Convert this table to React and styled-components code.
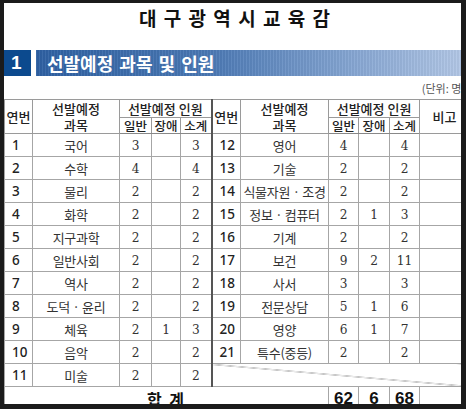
import React from "react";
import styled, { createGlobalStyle } from "styled-components";

const GlobalStyle = createGlobalStyle`
  html, body {
    margin: 0;
    padding: 0;
    background: #1b1b1b;
  }
  body {
    font-family: "Noto Sans CJK KR", "Noto Sans", sans-serif;
  }
`;

const left = [
  ["1", "국어", "3", "", "3"],
  ["2", "수학", "4", "", "4"],
  ["3", "물리", "2", "", "2"],
  ["4", "화학", "2", "", "2"],
  ["5", "지구과학", "2", "", "2"],
  ["6", "일반사회", "2", "", "2"],
  ["7", "역사", "2", "", "2"],
  ["8", "도덕 · 윤리", "2", "", "2"],
  ["9", "체육", "2", "1", "3"],
  ["10", "음악", "2", "", "2"],
  ["11", "미술", "2", "", "2"],
];

const right = [
  ["12", "영어", "4", "", "4"],
  ["13", "기술", "2", "", "2"],
  ["14", "식물자원 · 조경", "2", "", "2"],
  ["15", "정보 · 컴퓨터", "2", "1", "3"],
  ["16", "기계", "2", "", "2"],
  ["17", "보건", "9", "2", "11"],
  ["18", "사서", "3", "", "3"],
  ["19", "전문상담", "5", "1", "6"],
  ["20", "영양", "6", "1", "7"],
  ["21", "특수(중등)", "2", "", "2"],
  null,
];

const widths = [28, 87, 32, 29, 31, 29, 88, 30, 31, 30, 50];

const App = () => {
  return (
    <>
      <GlobalStyle />
      <Frame>
        <Panel>
          <Title>대 구 광 역 시 교 육 감</Title>
          <Banner>
            <NumBox>1</NumBox>
            <Bar>선발예정 과목 및 인원</Bar>
          </Banner>
          <Unit>(단위: 명)</Unit>
          <Table>
            <colgroup>
              {widths.map((w, i) => (
                <col key={i} style={{ width: w }} />
              ))}
            </colgroup>
            <thead>
              <tr>
                <Head rowSpan={2}>연번</Head>
                <Head rowSpan={2} $multi>
                  선발예정
                  <br />
                  과목
                </Head>
                <Head colSpan={3} $divider>
                  선발예정 인원
                </Head>
                <Head rowSpan={2}>연번</Head>
                <Head rowSpan={2} $multi>
                  선발예정
                  <br />
                  과목
                </Head>
                <Head colSpan={3}>선발예정 인원</Head>
                <Head rowSpan={2}>비고</Head>
              </tr>
              <tr>
                <SubHead>일반</SubHead>
                <SubHead>장애</SubHead>
                <SubHead $divider>소계</SubHead>
                <SubHead>일반</SubHead>
                <SubHead>장애</SubHead>
                <SubHead>소계</SubHead>
              </tr>
            </thead>
            <tbody>
              {left.map((l, i) => {
                const r = right[i];
                return (
                  <Row key={l[0]}>
                    <NoCell>{l[0]}</NoCell>
                    <NameCell>{l[1]}</NameCell>
                    <CountCell>{l[2]}</CountCell>
                    <CountCell>{l[3]}</CountCell>
                    <CountCell $divider>{l[4]}</CountCell>
                    {r ? (
                      <>
                        <NoCell>{r[0]}</NoCell>
                        <NameCell>{r[1]}</NameCell>
                        <CountCell>{r[2]}</CountCell>
                        <CountCell>{r[3]}</CountCell>
                        <CountCell>{r[4]}</CountCell>
                        <CountCell />
                      </>
                    ) : (
                      <EmptyCell colSpan={6} />
                    )}
                  </Row>
                );
              })}
              <TotalRow>
                <TotalLabel colSpan={7}>합 계</TotalLabel>
                <TotalCell>62</TotalCell>
                <TotalCell>6</TotalCell>
                <TotalCell>68</TotalCell>
                <TotalCell />
              </TotalRow>
            </tbody>
          </Table>
        </Panel>
      </Frame>
    </>
  );
};

export default App;

const Frame = styled.div`
  width: 466px;
  height: 409px;
  padding: 3px 5px 0 4px;
  box-sizing: border-box;
  overflow: hidden;
`;

const Panel = styled.div`
  width: 457px;
  height: 401px;
  background: #ffffff;
  overflow: hidden;
  display: flex;
  flex-direction: column;
`;

const Title = styled.h1`
  margin: 0;
  height: 47px;
  flex-shrink: 0;
  padding: 3px 0 0 4px;
  box-sizing: border-box;
  text-align: center;
  font-size: 19px;
  line-height: 24px;
  font-weight: 700;
  word-spacing: 3px;
  color: #111;
`;

const Banner = styled.div`
  display: flex;
  gap: 5px;
  height: 26px;
  flex-shrink: 0;
`;

const NumBox = styled.div`
  width: 27px;
  background: #0c4a8e;
  color: #fff;
  font-family: "Liberation Sans", Arial, sans-serif;
  font-weight: 700;
  font-size: 19px;
  line-height: 26px;
  padding-left: 7px;
  box-sizing: border-box;
`;

const Bar = styled.div`
  flex: 1;
  padding-left: 11px;
  color: #fff;
  font-size: 18px;
  font-weight: 700;
  line-height: 26px;
  word-spacing: 2px;
  background:
    repeating-linear-gradient(
      90deg,
      rgba(255, 255, 255, 0.06) 0 1px,
      rgba(0, 0, 0, 0.04) 1px 3px
    ),
    linear-gradient(90deg, #2f61a3 0%, #4a78b4 40%, #87a7d3 75%, #b2c7e6 100%);
`;

const Unit = styled.div`
  width: 465px;
  height: 23px;
  flex-shrink: 0;
  box-sizing: border-box;
  padding: 6px 4px 0 0;
  text-align: right;
  font-size: 11px;
  line-height: 13px;
  color: #555;
`;

const Table = styled.table`
  width: 465px;
  min-width: 465px;
  flex-shrink: 0;
  table-layout: fixed;
  border-collapse: collapse;
  border-top: 1px solid #6a6a6a;
  color: #222;
`;

const Head = styled.th`
  border: 1px solid #9a9a9a;
  border-right: ${(p) => (p.$divider ? "2px solid #555" : "1px solid #9a9a9a")};
  height: 17px;
  padding: 0;
  font-size: 13px;
  font-weight: 500;
  line-height: ${(p) => (p.$multi ? "16px" : "17px")};
  text-align: center;
  vertical-align: middle;
  white-space: nowrap;
`;

const SubHead = styled.th`
  border: 1px solid #9a9a9a;
  border-bottom: 1px solid #888;
  border-right: ${(p) => (p.$divider ? "2px solid #555" : "1px solid #9a9a9a")};
  height: 15px;
  padding: 0;
  font-size: 12.5px;
  font-weight: 500;
  line-height: 15px;
  text-align: center;
`;

const Row = styled.tr`
  height: 23px;
`;

const Cell = styled.td`
  border: 1px solid #a6a6a6;
  border-right: ${(p) => (p.$divider ? "2px solid #555" : "1px solid #a6a6a6")};
  padding: 0;
  text-align: center;
  vertical-align: middle;
  white-space: nowrap;
`;

const NoCell = styled(Cell)`
  font-family: "Noto Sans", sans-serif;
  font-size: 13.5px;
  font-weight: 500;
  text-align: left;
  padding-left: 7px;
`;

const NameCell = styled(Cell)`
  font-size: 13px;
  font-weight: 400;
  color: #333;
  letter-spacing: -0.3px;
`;

const CountCell = styled(Cell)`
  font-family: "DejaVu Serif Condensed", "Liberation Serif", serif;
  font-size: 13.5px;
  color: #333;
`;

const EmptyCell = styled(Cell)`
  background: linear-gradient(
    to top right,
    transparent calc(50% - 0.6px),
    #8a8a8a 50%,
    transparent calc(50% + 0.6px)
  );
`;

const TotalRow = styled.tr`
  height: 24px;
`;

const TotalLabel = styled(Cell)`
  font-size: 16px;
  line-height: 20px;
  font-weight: 700;
  letter-spacing: 2px;
  color: #111;
`;

const TotalCell = styled(Cell)`
  font-family: "Liberation Sans", Arial, sans-serif;
  font-size: 17px;
  line-height: 20px;
  font-weight: 700;
  color: #111;
`;
